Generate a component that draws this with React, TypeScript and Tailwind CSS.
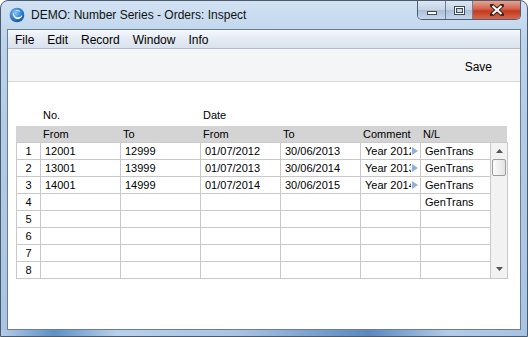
const menus = ["File", "Edit", "Record", "Window", "Info"];

const rows = [
  ["1", "12001", "12999", "01/07/2012", "30/06/2013", "Year 2012", "GenTrans"],
  ["2", "13001", "13999", "01/07/2013", "30/06/2014", "Year 2013", "GenTrans"],
  ["3", "14001", "14999", "01/07/2014", "30/06/2015", "Year 2014", "GenTrans"],
  ["4", "", "", "", "", "", "GenTrans"],
  ["5", "", "", "", "", "", ""],
  ["6", "", "", "", "", "", ""],
  ["7", "", "", "", "", "", ""],
  ["8", "", "", "", "", "", ""],
];

const cols = "grid grid-cols-[24px_80px_80px_80px_80px_60px_70px]";
const ui = "font-['Liberation_Sans',Arial,sans-serif]";

function AppIcon() {
  return (
    <svg width="16" height="16" viewBox="0 0 16 16">
      <defs>
        <radialGradient id="ball" cx="40%" cy="35%" r="70%">
          <stop offset="0" stopColor="#8cc8f4" />
          <stop offset="0.6" stopColor="#2b7fd0" />
          <stop offset="1" stopColor="#184f95" />
        </radialGradient>
      </defs>
      <circle cx="8" cy="8" r="7.3" fill="url(#ball)" />
      <path d="M4.2 5.2 C3 8.5 5.5 12.2 9.4 12 C12 11.8 13.4 9.8 13.2 7.6 C12.2 10.2 8.6 11.2 6.4 9.4 C5 8.2 4.5 6.6 4.2 5.2 Z" fill="#fff" />
      <path d="M6 3.6 C8 2.6 10.6 3.2 11.6 5.2 C10 4.2 8 4 6 3.6 Z" fill="#e8f4ff" />
    </svg>
  );
}

function CaptionButtons() {
  return (
    <div className="mr-[6px] flex h-[19px] overflow-hidden rounded-b-[5px] border border-t-0 border-[#4e5f74]">
      <div className="flex w-[28px] items-end justify-center border-r border-[#6f8096] bg-[linear-gradient(#dce7f3,#c3d3e6_50%,#aebfd6_51%,#c6d6ea)] pb-[4px]">
        <div className="h-[4px] w-[10px] border border-[#3c4a5c] bg-white" />
      </div>
      <div className="flex w-[27px] items-center justify-center border-r border-[#6f8096] bg-[linear-gradient(#dce7f3,#c3d3e6_50%,#aebfd6_51%,#c6d6ea)]">
        <div className="flex h-[9px] w-[11px] items-center justify-center border border-[#3c4a5c] bg-white">
          <div className="h-[5px] w-[7px] border border-[#3c4a5c] bg-[#c9d6e5]" />
        </div>
      </div>
      <div className="flex w-[47px] items-center justify-center bg-[linear-gradient(#e8a493,#d2614a_45%,#c23a1f_55%,#d9674a)]">
        <svg width="14" height="12" viewBox="0 0 14 12">
          <path d="M2 1.5 L12 10.5 M12 1.5 L2 10.5" stroke="#3b2520" strokeWidth="4" strokeLinecap="square" />
          <path d="M2.5 2 L11.5 10 M11.5 2 L2.5 10" stroke="#fff" strokeWidth="2" />
        </svg>
      </div>
    </div>
  );
}

function Triangle({ down }: { down?: boolean }) {
  return (
    <svg width="7" height="4" viewBox="0 0 7 4">
      <path d={down ? "M0 0 H7 L3.5 4 Z" : "M0 4 H7 L3.5 0 Z"} fill="#555" />
    </svg>
  );
}

function Scrollbar() {
  return (
    <div className="flex h-[137px] w-[17px] flex-col items-center border border-l-0 border-[#c9c9c9] bg-[#f2f2f2]">
      <div className="flex h-[16px] items-center justify-center">
        <Triangle />
      </div>
      <div className="h-[17px] w-[14px] rounded-[2px] border border-[#9b9b9b] bg-[linear-gradient(90deg,#fcfcfc,#e3e3e3)]" />
      <div className="flex-1" />
      <div className="flex h-[18px] items-center justify-center">
        <Triangle down />
      </div>
    </div>
  );
}

export default function App() {
  return (
    <div
      className={`flex h-[337px] w-[528px] flex-col overflow-hidden rounded-t-[8px] border border-[#4b5b6e] bg-[linear-gradient(180deg,#d2e2f3,#bcd3eb_12%,#b2cbe6_40%,#a9c4e2)] text-black ${ui}`}
    >
      {/* title bar */}
      <div className="flex h-[28px] items-start">
        <div className="flex h-[27px] items-center gap-[6px] pl-[8px]">
          <AppIcon />
          <span className="text-[12px] leading-none text-[#111]">DEMO: Number Series - Orders: Inspect</span>
        </div>
        <div className="ml-auto">
          <CaptionButtons />
        </div>
      </div>

      {/* client area */}
      <div className="ml-[6px] flex h-[301px] w-[514px] flex-col border border-[#6b7c91] bg-white">
        <div className="flex h-[19px] items-center gap-[13px] border-b border-[#b3bdca] bg-[linear-gradient(#f5f8fc,#e6ecf4_45%,#dae2ed)] pl-[7px] pt-[2px] text-[12px]">
          {menus.map((m) => (
            <span key={m}>{m}</span>
          ))}
        </div>
        <div className="flex h-[33px] items-center justify-end border-b border-[#d6d9de] bg-[#f4f5f7] pr-[28px] pt-[3px] text-[12px]">
          Save
        </div>

        <div className="pl-[8px] pt-[26px] text-[11px]">
          <div className={`${cols} h-[14px] leading-[14px] pl-px`}>
            <span />
            <span className="pl-[2px]">No.</span>
            <span />
            <span className="pl-[2px]">Date</span>
          </div>
          <div className={`${cols} mt-[4px] h-[16px] w-[491px] bg-[#d4d4d4] pl-px leading-[16px]`}>
            <span />
            <span className="pl-[2px]">From</span>
            <span className="pl-[2px]">To</span>
            <span className="pl-[2px]">From</span>
            <span className="pl-[2px]">To</span>
            <span className="pl-[2px]">Comment</span>
            <span className="pl-[2px]">N/L</span>
          </div>
          <div className="flex">
            <div className={`${cols} border-l border-t border-[#c9c9c9]`}>
              {rows.map((r) =>
                r.map((c, i) => (
                  <div
                    key={r[0] + "-" + i}
                    className={`relative h-[17px] overflow-hidden whitespace-nowrap border-b border-r border-[#c9c9c9] leading-[16px] ${
                      i === 0 ? "text-center" : "pl-[4px]"
                    }`}
                  >
                    {i === 5 && c ? (
                      <>
                        <span className="block w-[46px] overflow-hidden">{c}</span>
                        <svg className="absolute right-[2px] top-[4px]" width="6" height="8" viewBox="0 0 6 8">
                          <path d="M0 0 L6 4 L0 8 Z" fill="#8fb1d9" />
                        </svg>
                      </>
                    ) : (
                      c
                    )}
                  </div>
                ))
              )}
            </div>
            <Scrollbar />
          </div>
        </div>
      </div>

      {/* bottom frame */}
      <div className="flex-1 bg-[linear-gradient(90deg,#b5cde8,#5f8fc4_10%,#b8d0ea_22%,#a9c3e2_45%,#5a88bf_70%,#b3cbe7_85%,#a8c2e1)]" />
    </div>
  );
}
